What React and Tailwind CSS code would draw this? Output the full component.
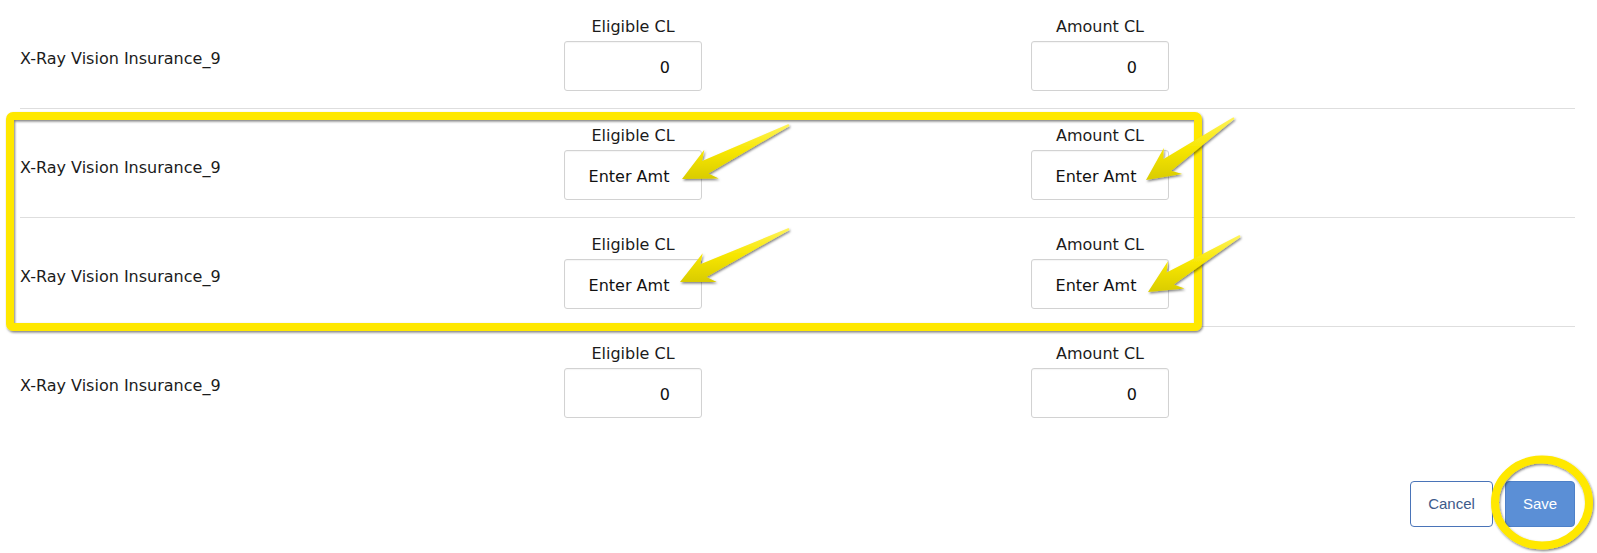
import React from "react";

const rows = [
  { name: "X-Ray Vision Insurance_9", eligible: "0", amount: "0" },
  { name: "X-Ray Vision Insurance_9", eligible: "", amount: "" },
  { name: "X-Ray Vision Insurance_9", eligible: "", amount: "" },
  { name: "X-Ray Vision Insurance_9", eligible: "0", amount: "0" },
];

// annotation arrows: tip point and tail point
const arrows = [
  { tip: [682, 179], tail: [789, 125] },
  { tip: [1146, 180], tail: [1234, 118] },
  { tip: [680, 282], tail: [789, 229] },
  { tip: [1148, 292], tail: [1240, 236] },
];

const arrowPoints = (tip, tail) => {
  const dx = tail[0] - tip[0];
  const dy = tail[1] - tip[1];
  const len = Math.hypot(dx, dy);
  const ux = dx / len;
  const uy = dy / len;
  const nx = -uy;
  const ny = ux;
  const at = (a, b) => [tip[0] + a * ux + b * nx, tip[1] + a * uy + b * ny];
  const pts = [
    tip,
    at(33, -16),
    at(26, -7),
    [tail[0] - 1 * nx, tail[1] - 1 * ny],
    [tail[0] + 1 * nx, tail[1] + 1 * ny],
    at(26, 7),
    at(33, 16),
  ];
  return pts.map((p) => p[0].toFixed(1) + "," + p[1].toFixed(1)).join(" ");
};

const AmountField = ({ label, value }) => (
  <div className="flex flex-col items-center w-[138px]">
    <div className="h-6 pt-[3px] leading-6 text-[16px] text-[#1b1b1b] whitespace-nowrap">{label}</div>
    <div className="mt-[5px] w-[138px] h-[50px] border border-[#d2d2d2] rounded-[3px] bg-white shadow-[inset_0_1px_1px_rgba(0,0,0,0.04)] flex items-center pt-1 text-[16px] text-[#111]">
      {value === "" ? (
        <span className="w-full text-center pr-2">Enter Amt</span>
      ) : (
        <span className="w-full text-right pr-[31px]">{value}</span>
      )}
    </div>
  </div>
);

const Row = ({ row, last }) => (
  <div className={"flex pt-3 pb-[17px] " + (last ? "" : "border-b border-[#dedede]")}>
    <div className="w-[544px] pt-[35px] text-[16px] leading-6 text-[#1b1b1b]">{row.name}</div>
    <AmountField label="Eligible CL" value={row.eligible} />
    <div className="w-[329px]" />
    <AmountField label="Amount CL" value={row.amount} />
  </div>
);

export default function App() {
  return (
    <div
      className="relative w-[1597px] h-[553px] bg-white overflow-hidden"
      style={{ fontFamily: "'DejaVu Sans', 'Open Sans', sans-serif" }}
    >
      <div className="pl-5 pr-[22px]">
        {rows.map((row, i) => (
          <Row key={i} row={row} last={i === rows.length - 1} />
        ))}
        <div className="flex justify-end gap-3 mt-[46px]">
          <button
            className="w-[83px] h-[46px] rounded-[4px] border border-[#4a74b8] bg-white text-[#3d5a8a] text-[15px]"
            style={{ fontFamily: "'Liberation Sans', Arial, sans-serif" }}
          >
            Cancel
          </button>
          <button
            className="w-[70px] h-[46px] rounded-[4px] border border-[#4d80c8] bg-[#5b8fd6] text-white text-[15px]"
            style={{ fontFamily: "'Liberation Sans', Arial, sans-serif" }}
          >
            Save
          </button>
        </div>
      </div>

      <svg
        className="absolute top-0 left-0 pointer-events-none"
        width="1597"
        height="553"
        viewBox="0 0 1597 553"
      >
        <defs>
          <filter id="shadow" x="-10%" y="-10%" width="120%" height="120%">
            <feDropShadow dx="1" dy="1.5" stdDeviation="0.8" floodColor="#000" floodOpacity="0.5" />
          </filter>
          <linearGradient id="arrowFill" x1="0" y1="0" x2="0" y2="1">
            <stop offset="0" stopColor="#fff45a" />
            <stop offset="0.5" stopColor="#f7e600" />
            <stop offset="1" stopColor="#d9cc00" />
          </linearGradient>
        </defs>
        <rect
          x="10"
          y="116"
          width="1188"
          height="211"
          rx="3"
          fill="none"
          stroke="#ffe800"
          strokeWidth="8"
          filter="url(#shadow)"
        />
        <ellipse
          cx="1542"
          cy="502.5"
          rx="47"
          ry="43"
          fill="none"
          stroke="#ffe800"
          strokeWidth="8"
          filter="url(#shadow)"
        />
        {arrows.map((a, i) => (
          <polygon
            key={i}
            points={arrowPoints(a.tip, a.tail)}
            fill="url(#arrowFill)"
            strokeLinejoin="round"
            filter="url(#shadow)"
          />
        ))}
      </svg>
    </div>
  );
}
